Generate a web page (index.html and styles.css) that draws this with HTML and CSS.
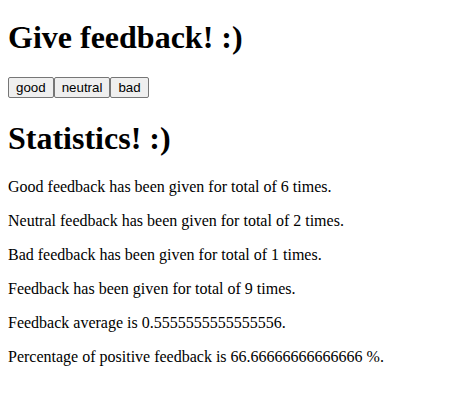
FILE: index.html
```html
<!DOCTYPE html>
<html>
<head>
<meta charset="utf-8">
<link rel="stylesheet" href="styles.css">
</head>
<body class="page">
<h1 class="title first">Give feedback! :)</h1>
<div class="buttons"><button class="btn">good</button><button class="btn">neutral</button><button class="btn">bad</button></div>
<h1 class="title">Statistics! :)</h1>
<p class="stat">Good feedback has been given for total of 6 times.</p>
<p class="stat">Neutral feedback has been given for total of 2 times.</p>
<p class="stat">Bad feedback has been given for total of 1 times.</p>
<p class="stat">Feedback has been given for total of 9 times.</p>
<p class="stat">Feedback average is 0.5555555555555556.</p>
<p class="stat">Percentage of positive feedback is 66.66666666666666 %.</p>
</body>
</html>
```
FILE: styles.css
```css
.page {
  margin: 8px;
  font-family: "Liberation Serif", "Times New Roman", serif;
  font-size: 16px;
  color: #000;
  background: #fff;
}
.title {
  font-size: 32px;
  font-weight: bold;
  margin: 21.44px 0;
}
.title.first {
  margin-top: 11px;
}
.buttons {
  display: flex;
}
.btn {
  font-family: "Liberation Sans", Arial, sans-serif;
  font-size: 13.333px;
  color: #000;
  background: #efefef;
  border: 1px solid #767676;
  border-radius: 2px;
  padding: 2px 7px;
  margin: 0;
}
.stat {
  margin: 16px 0;
}
```
